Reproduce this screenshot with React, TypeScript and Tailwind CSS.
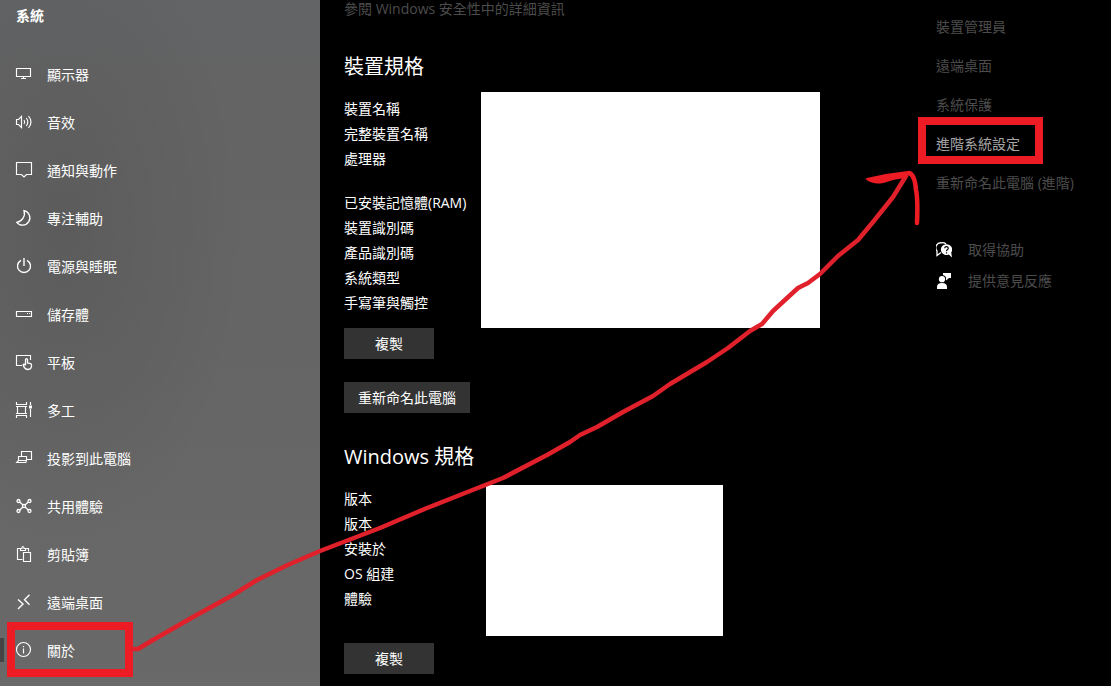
import type { ReactNode } from "react";

type NavItem = {
  label: string;
  icon: ReactNode;
  active?: boolean;
};

const Icon = ({ children }: { children: ReactNode }) => (
  <svg
    viewBox="0 0 16 16"
    className="w-4 h-4 shrink-0 overflow-visible"
    fill="none"
    stroke="currentColor"
    strokeWidth="1.15"
    aria-hidden="true"
  >
    {children}
  </svg>
);

const navItems: NavItem[] = [
  {
    label: "顯示器",
    icon: (
      <Icon>
        <path d="M.5 2.5h14v8H.5zM7.5 10.5v2M5 12.5h5" />
      </Icon>
    ),
  },
  {
    label: "音效",
    icon: (
      <Icon>
        <path d="M.5 5.5h2L5.500 2.500v11l-3-3h-2zM8 6q1.500 2 0 4M10.300 4q3 4 0 8M12.500 2q5 6 0 12" />
      </Icon>
    ),
  },
  {
    label: "通知與動作",
    icon: (
      <Icon>
        <path d="M.5.5h15v12H10.500L8 15l-2.500-2.500H.5z" />
      </Icon>
    ),
  },
  {
    label: "專注輔助",
    icon: (
      <Icon>
        <path d="M8 .7A7.300 7.300 0 1 1 .8 12.300 9 9 0 0 0 8 .7z" strokeWidth="1.3" />
      </Icon>
    ),
  },
  {
    label: "電源與睡眠",
    icon: (
      <Icon>
        <path d="M8 0v8M5 2.300a6.500 6.500 0 1 0 6 0" strokeWidth="1.4" />
      </Icon>
    ),
  },
  {
    label: "儲存體",
    icon: (
      <Icon>
        <path d="M.5 5.500h15v5H.5zM11 7.500h1M13 7.500h1" />
      </Icon>
    ),
  },
  {
    label: "平板",
    icon: (
      <Icon>
        <path d="M6 11.500H.5v-10h14V6" />
        <path
          d="M9.500 11.500V5.500q1-1.800 2 0V9l3 .7q1.200.3 1 1.500v1.300q-.5 3-3.500 3-3 0-4.500-3.500l-.3-1.500q1-.8 2.300.8"
          strokeWidth="1.3"
        />
      </Icon>
    ),
  },
  {
    label: "多工",
    icon: (
      <Icon>
        <path d="M.5 0v2.500h10V0M1.500 4.500h8v7h-8zM0 4.500h11M0 11.500h11M.5 16v-2.500h10V16M14.500 0v3M14.500 7v8" />
        <path d="M13 3.500h3v3h-3z" fill="currentColor" stroke="none" />
      </Icon>
    ),
  },
  {
    label: "投影到此電腦",
    icon: (
      <Icon>
        <path d="M5.500 6V1.500h10v8H11M2.500 6.500h8v4h-8zM2.500 10.500L.7 12.500h9l1-2" />
      </Icon>
    ),
  },
  {
    label: "共用體驗",
    icon: (
      <Icon>
        <g strokeWidth="1.3">
          <circle cx="2.500" cy="3" r="1.500" />
          <circle cx="13.500" cy="3" r="1.500" />
          <circle cx="2.500" cy="13" r="1.500" />
          <circle cx="13.500" cy="13" r="1.500" />
          <circle cx="8" cy="8" r="1.500" />
          <path d="M3.700 4L7 7M12.300 4L9 7M3.700 12L7 9M12.300 12L9 9" />
        </g>
      </Icon>
    ),
  },
  {
    label: "剪貼簿",
    icon: (
      <Icon>
        <path d="M6.500 13.500h-5v-11h3M9.500 2.500h3v3M4.500 4.500v-2H6q0-2 1-2t1 2h1.500v2zM7.500 6.500h7v9h-7z" />
      </Icon>
    ),
  },
  {
    label: "遠端桌面",
    icon: (
      <Icon>
        <path d="M2 5.500l5 4.500-5 5M13.500.7l-5 5 5 5" strokeWidth="1.4" />
      </Icon>
    ),
  },
  {
    label: "關於",
    active: true,
    icon: (
      <Icon>
        <circle cx="7.500" cy="7.500" r="7" />
        <path d="M7.500 6.500v5M7.500 4v1.200" />
      </Icon>
    ),
  },
];

const relatedLinks = [
  { label: "裝置管理員" },
  { label: "遠端桌面" },
  { label: "系統保護" },
  { label: "進階系統設定", marked: true },
  { label: "重新命名此電腦 (進階)" },
];

const deviceSpecs = [
  ["裝置名稱", "完整裝置名稱", "處理器"],
  ["已安裝記憶體(RAM)", "裝置識別碼", "產品識別碼", "系統類型", "手寫筆與觸控"],
];

const windowsSpecs = ["版本", "版本", "安裝於", "OS 組建", "體驗"];

const Marker = ({ className }: { className: string }) => (
  <span className={`absolute border-8 border-[#ed1c24] pointer-events-none ${className}`} />
);

const PanelButton = ({ children }: { children: ReactNode }) => (
  <button className="block h-[31px] min-w-[90px] px-3.5 bg-[#333333] hover:bg-[#444444] leading-5">
    {children}
  </button>
);

const SpecList = ({ rows }: { rows: string[] }) => (
  <ul className="leading-[25px]">
    {rows.map((row, i) => (
      <li key={i}>{row}</li>
    ))}
  </ul>
);

const Sidebar = () => (
  <nav className="w-80 shrink-0 bg-[radial-gradient(ellipse_at_20%_34%,rgba(0,0,0,0.09),transparent_50%),linear-gradient(#626466,#646464_12%,#656565_50%,#696969)]">
    <h1 className="h-8 mb-[18px] px-4 font-bold leading-8">系統</h1>
    <ul>
      {navItems.map((item) => (
        <li key={item.label} className="relative">
          <a href="#" className="flex items-center h-12 pl-4 gap-[15px] hover:bg-white/10">
            {item.icon}
            <span className="pt-0.5">{item.label}</span>
          </a>
          {item.active && (
            <>
              <span className="absolute left-0 top-3 w-1 h-6 bg-[#444444]" />
              <Marker className="left-[7px] -top-1 w-[126px] h-[55px]" />
            </>
          )}
        </li>
      ))}
    </ul>
  </nav>
);

const RelatedSettings = () => (
  <aside className="w-[175px] shrink-0 pt-[7px] text-[#4c4c4c]">
    <ul>
      {relatedLinks.map((link) => (
        <li key={link.label} className="relative leading-[39px]">
          <a href="#" className={link.marked ? "text-[#a6a6a6]" : "hover:text-[#a6a6a6]"}>
            {link.label}
          </a>
          {link.marked && <Marker className="-left-[18px] -top-[7px] w-[125px] h-[47px]" />}
        </li>
      ))}
    </ul>
    <ul className="mt-8">
      <li>
        <a href="#" className="flex items-center h-[31px] gap-4">
          <svg viewBox="0 0 16 16" className="w-4 h-4 shrink-0" aria-hidden="true">
            <path d="M5 10.500L1 13.500V9A5 5 0 0 1 5.500.8Q8 .3 10 2" fill="none" stroke="#fff" strokeWidth="1.300" />
            <path d="M10.300 2.200a5.400 5.400 0 1 0 2.500 10.200L16 15.600l-.8-5A5.400 5.400 0 0 0 10.300 2.200z" fill="#fff" />
            <path d="M8.600 6.300q.2-1.600 1.900-1.600t1.800 1.500q0 .9-1 1.500t-.8 1.500M10.500 10.200v1.200" fill="none" stroke="#000" strokeWidth="1.200" />
          </svg>
          <span>取得協助</span>
        </a>
      </li>
      <li>
        <a href="#" className="flex items-center h-[31px] gap-4">
          <svg viewBox="0 0 16 16" className="w-4 h-4 shrink-0" fill="#fff" aria-hidden="true">
            <circle cx="6" cy="6.200" r="3.100" />
            <path d="M1 16v-2q0-4 5-4t5 4v2zM7 0h8v5h-2l-3 2.500V4.500Q9.500 2.500 7 2z" />
          </svg>
          <span>提供意見反應</span>
        </a>
      </li>
    </ul>
  </aside>
);

const App = () => {
  return (
    <div className="relative flex min-h-screen overflow-hidden bg-black text-white text-sm font-['Open_Sans','Noto_Sans_CJK_TC',sans-serif]">
      <Sidebar />

      <main className="flex-1 min-w-0 pl-6">
        <a href="#" className="block h-[53px] leading-[18px] text-[#4c4c4c]">
          參閱 Windows 安全性中的詳細資訊
        </a>

        {/* Device specifications */}
        <section>
          <h2 className="h-[39px] text-xl leading-7">裝置規格</h2>
          <div className="flex">
            <div className="w-[137px] shrink-0 pt-1">
              <SpecList rows={deviceSpecs[0]} />
              <div className="mt-[19px]">
                <SpecList rows={deviceSpecs[1]} />
              </div>
            </div>
            <div className="w-[339px] h-[236px] bg-white" />
          </div>
          <PanelButton>複製</PanelButton>
          <div className="mt-[23px]">
            <PanelButton>重新命名此電腦</PanelButton>
          </div>
        </section>

        {/* Windows specifications */}
        <section className="mt-[30px]">
          <h2 className="h-[42px] text-xl leading-7">Windows 規格</h2>
          <div className="flex mb-[7px]">
            <div className="w-[142px] shrink-0 pt-px">
              <SpecList rows={windowsSpecs} />
            </div>
            <div className="w-[237px] h-[151px] bg-white" />
          </div>
          <PanelButton>複製</PanelButton>
        </section>
      </main>

      <RelatedSettings />

      {/* Hand-drawn arrow from the About item to the advanced settings link */}
      <svg
        viewBox="0 0 1111 686"
        className="absolute left-0 top-0 w-[1111px] h-[686px] pointer-events-none"
        fill="none"
        stroke="#e0202a"
        strokeWidth="4.500"
        strokeLinecap="round"
        strokeLinejoin="round"
        aria-hidden="true"
      >
        <path d="M133 649h5L153 640 193 617 233 595 257 580Q288 564 320 551L380 528 427 508 470 491 503 478 547 455 570 442 580 435 597 427 623 412 653 396 670 384 707 362 728 348 750 331 762 324 773 311 798 288 808 283 820 274 838 256 858 240 873 222 893 197 906 176" />
        <path d="M909 173q6 2 7 17 2 9 1 33" stroke="#ed1c24" />
        <path d="M867 179Q888 174 908 172L905 177Q894 178 883 182 874 184 867 179z" stroke="#ed1c24" strokeWidth="2" fill="#ed1c24" />
      </svg>
    </div>
  );
};

export default App;
